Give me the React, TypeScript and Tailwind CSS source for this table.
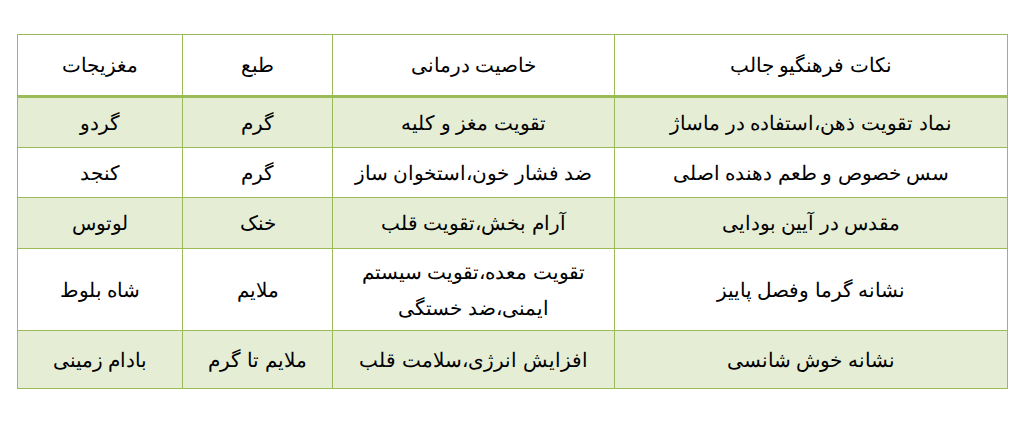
import React from 'react';

type Row = { nut: string; nature: string; benefit: React.ReactNode; note: string; h: string; shade: boolean };

const rows: Row[] = [
    { nut: 'گردو', nature: 'گرم', benefit: 'تقویت مغز و کلیه', note: 'نماد تقویت ذهن،استفاده در ماساژ', h: 'h-[51px]', shade: true },
    { nut: 'کنجد', nature: 'گرم', benefit: 'ضد فشار خون،استخوان ساز', note: 'سس خصوص و طعم دهنده اصلی', h: 'h-[50px]', shade: false },
    { nut: 'لوتوس', nature: 'خنک', benefit: 'آرام بخش،تقویت قلب', note: 'مقدس در آیین بودایی', h: 'h-[51px]', shade: true },
    {
        nut: 'شاه بلوط',
        nature: 'ملایم',
        benefit: (
            <>
                تقویت معده،تقویت سیستم
                <br />
                ایمنی،ضد خستگی
            </>
        ),
        note: 'نشانه گرما وفصل پاییز',
        h: 'h-[82px]',
        shade: false,
    },
    { nut: 'بادام زمینی', nature: 'ملایم تا گرم', benefit: 'افزایش انرژی،سلامت قلب', note: 'نشانه خوش شانسی', h: 'h-[58px]', shade: true },
];

export default function App() {
    return (
        <div className="w-[1024px] h-[437px] bg-white pt-[34px] pl-[17px]" style={{ fontFamily: '"Liberation Sans", sans-serif' }}>
            <table dir="rtl" className="w-[990px] border-collapse table-fixed text-[20px] text-black">
                <colgroup>
                    <col className="w-[393px]" />
                    <col className="w-[282px]" />
                    <col className="w-[150px]" />
                    <col className="w-[165px]" />
                </colgroup>
                <thead>
                    <tr className="h-[62px]">
                        <th className="border border-[#9bbb59] border-b-[3px] font-normal text-center">نکات فرهنگیو جالب</th>
                        <th className="border border-[#9bbb59] border-b-[3px] font-normal text-center">خاصیت درمانی</th>
                        <th className="border border-[#9bbb59] border-b-[3px] font-normal text-center">طبع</th>
                        <th className="border border-[#9bbb59] border-b-[3px] font-normal text-center">مغزیجات</th>
                    </tr>
                </thead>
                <tbody>
                    {rows.map((r, i) => (
                        <tr key={i} className={`${r.h} ${r.shade ? 'bg-[#e5eed5]' : 'bg-white'}`}>
                            <td className="border border-[#9bbb59] text-center">{r.note}</td>
                            <td className="border border-[#9bbb59] text-center leading-[36px]">{r.benefit}</td>
                            <td className="border border-[#9bbb59] text-center">{r.nature}</td>
                            <td className="border border-[#9bbb59] text-center">{r.nut}</td>
                        </tr>
                    ))}
                </tbody>
            </table>
        </div>
    );
}
